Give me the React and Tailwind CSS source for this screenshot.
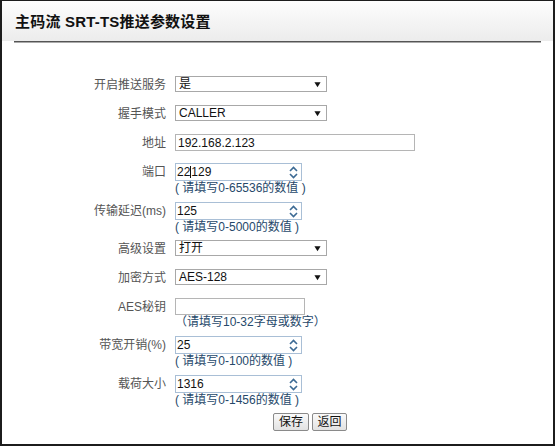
import React from 'react';

const labelCls = 'w-[164px] text-right text-[12px] leading-[18px] text-[#555]';

function Arrow() {
  return (
    <svg className="w-[7px] h-[7px]" viewBox="0 0 8 8">
      <path d="M0.5 1.5h7L4 7z" fill="#111" />
    </svg>
  );
}

function Select({ value, width = 'w-[152px]' }) {
  return (
    <div className={`${width} h-[16px] border border-[#a8a8a8] bg-white flex items-center justify-between pl-[3px] pr-[5px]`}>
      <span className="text-[12px] leading-none text-[#111]">{value}</span>
      <Arrow />
    </div>
  );
}

function Spinner() {
  return (
    <div className="flex flex-col items-center justify-center gap-[1px] pr-[3px]">
      <svg className="w-[9px] h-[6px]" viewBox="0 0 9 6">
        <path d="M1 5L4.5 1.5L8 5" fill="none" stroke="#3c6a94" strokeWidth="1.6" />
      </svg>
      <svg className="w-[9px] h-[6px]" viewBox="0 0 9 6">
        <path d="M1 1L4.5 4.5L8 1" fill="none" stroke="#3c6a94" strokeWidth="1.6" />
      </svg>
    </div>
  );
}

function NumberInput({ value, cursor }) {
  return (
    <div className="w-[127px] h-[18px] border border-[#a9bfd6] bg-white flex items-center justify-between">
      <span className="pl-[1px] text-[12px] leading-none text-[#111] flex items-center">
        {cursor ? (
          <>
            {value.slice(0, 2)}
            <span className="inline-block w-[1px] h-[12px] bg-[#111]" />
            {value.slice(2)}
          </>
        ) : value}
      </span>
      <Spinner />
    </div>
  );
}

function Hint({ children }) {
  return (
    <div className="mt-[1px] text-[12px] leading-[13px] text-[#26486a]">{children}</div>
  );
}

function Row({ label, h = 'h-[29px]', children }) {
  return (
    <div className={`flex items-start gap-[9px] ${h}`}>
      <div className={labelCls}>{label}</div>
      <div className="flex flex-col">{children}</div>
    </div>
  );
}

export default function App() {
  return (
    <div
      className="w-[557px] h-[448px] bg-white"
      style={{ fontFamily: '"Liberation Sans", "Noto Sans CJK SC", sans-serif' }}
    >
      <div className="w-[555px] h-[446px] border-2 border-t border-[#1c1c1c] flex flex-col">
        <div className="h-[40px] bg-gradient-to-b from-[#fdfdfd] to-[#ececec] flex items-center pl-[13px] pt-[2px]">
          <span className="text-[15px] font-bold text-[#111] tracking-[0.2px]">主码流 SRT-TS推送参数设置</span>
        </div>
        <div className="mx-[12px] h-[2px] bg-[#555] border-b border-[#aaa]" />

        <div className="flex flex-col pt-[33px]">
          <Row label="开启推送服务">
            <Select value="是" />
          </Row>
          <Row label="握手模式">
            <Select value="CALLER" />
          </Row>
          <Row label="地址">
            <div className="w-[240px] h-[17px] border border-[#b5b5b5] bg-white flex items-center pl-[2px] text-[12px] leading-none text-[#111]">
              192.168.2.123
            </div>
          </Row>
          <Row label="端口" h="h-[39px]">
            <NumberInput value="22129" cursor />
            <Hint>( 请填写0-65536的数值 )</Hint>
          </Row>
          <Row label="传输延迟(ms)" h="h-[38px]">
            <NumberInput value="125" />
            <Hint>( 请填写0-5000的数值 )</Hint>
          </Row>
          <Row label="高级设置">
            <Select value="打开" />
          </Row>
          <Row label="加密方式">
            <Select value="AES-128" />
          </Row>
          <Row label="AES秘钥" h="h-[38px]">
            <div className="w-[130px] h-[17px] border border-[#b5b5b5] bg-white" />
            <Hint>（请填写10-32字母或数字）</Hint>
          </Row>
          <Row label="带宽开销(%)" h="h-[39px]">
            <NumberInput value="25" />
            <Hint>( 请填写0-100的数值 )</Hint>
          </Row>
          <Row label="载荷大小" h="h-[38px]">
            <NumberInput value="1316" />
            <Hint>( 请填写0-1456的数值 )</Hint>
          </Row>
          <div className="flex gap-[3px] pl-[271px]">
            <button className="w-[36px] h-[18px] border border-[#8a8a8a] bg-gradient-to-b from-[#fafafa] to-[#e2e2e2] text-[12px] leading-none text-[#111] rounded-[2px]">保存</button>
            <button className="w-[35px] h-[18px] border border-[#8a8a8a] bg-gradient-to-b from-[#fafafa] to-[#e2e2e2] text-[12px] leading-none text-[#111] rounded-[2px]">返回</button>
          </div>
        </div>
      </div>
    </div>
  );
}
